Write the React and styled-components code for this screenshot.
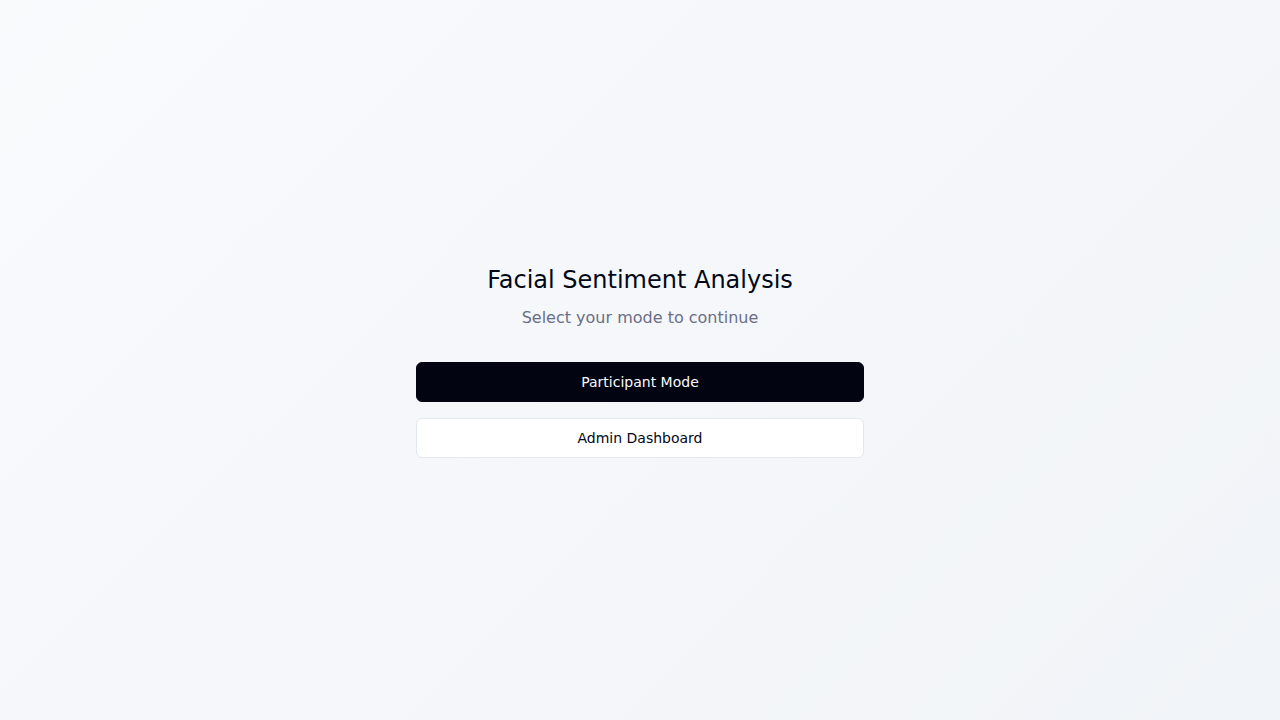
import React from "react";
import styled, { createGlobalStyle } from "styled-components";

const Global = createGlobalStyle`
  * { box-sizing: border-box; }
  html, body { margin: 0; padding: 0; }
  body { font-family: "DejaVu Sans", sans-serif; }
`;

const Page = styled.div`
  min-height: 100vh;
  display: flex;
  align-items: center;
  justify-content: center;
  background: linear-gradient(135deg, #f8fafc 0%, #f1f4f8 100%);
`;

const Panel = styled.div`
  width: 448px;
  padding-top: 2px;
  display: flex;
  flex-direction: column;
  align-items: stretch;
`;

const Title = styled.h1`
  margin: 0 0 10px;
  font-size: 24px;
  line-height: 32px;
  font-weight: 400;
  color: #020817;
  text-align: center;
`;

const Subtitle = styled.p`
  margin: 0 0 32px;
  font-size: 16px;
  line-height: 24px;
  color: #6b6e85;
  text-align: center;
`;

const Buttons = styled.div`
  display: flex;
  flex-direction: column;
  gap: 16px;
`;

const Button = styled.button`
  height: 40px;
  width: 100%;
  border-radius: 6px;
  font-family: inherit;
  font-size: 14px;
  cursor: pointer;
  border: 1px solid ${(p) => (p.$primary ? "#020412" : "#e2e8f0")};
  background: ${(p) => (p.$primary ? "#020412" : "#ffffff")};
  color: ${(p) => (p.$primary ? "#f8fafc" : "#020817")};
`;

export default function App() {
  return (
    <>
      <Global />
      <Page>
        <Panel>
          <Title>Facial Sentiment Analysis</Title>
          <Subtitle>Select your mode to continue</Subtitle>
          <Buttons>
            <Button $primary>Participant Mode</Button>
            <Button>Admin Dashboard</Button>
          </Buttons>
        </Panel>
      </Page>
    </>
  );
}
